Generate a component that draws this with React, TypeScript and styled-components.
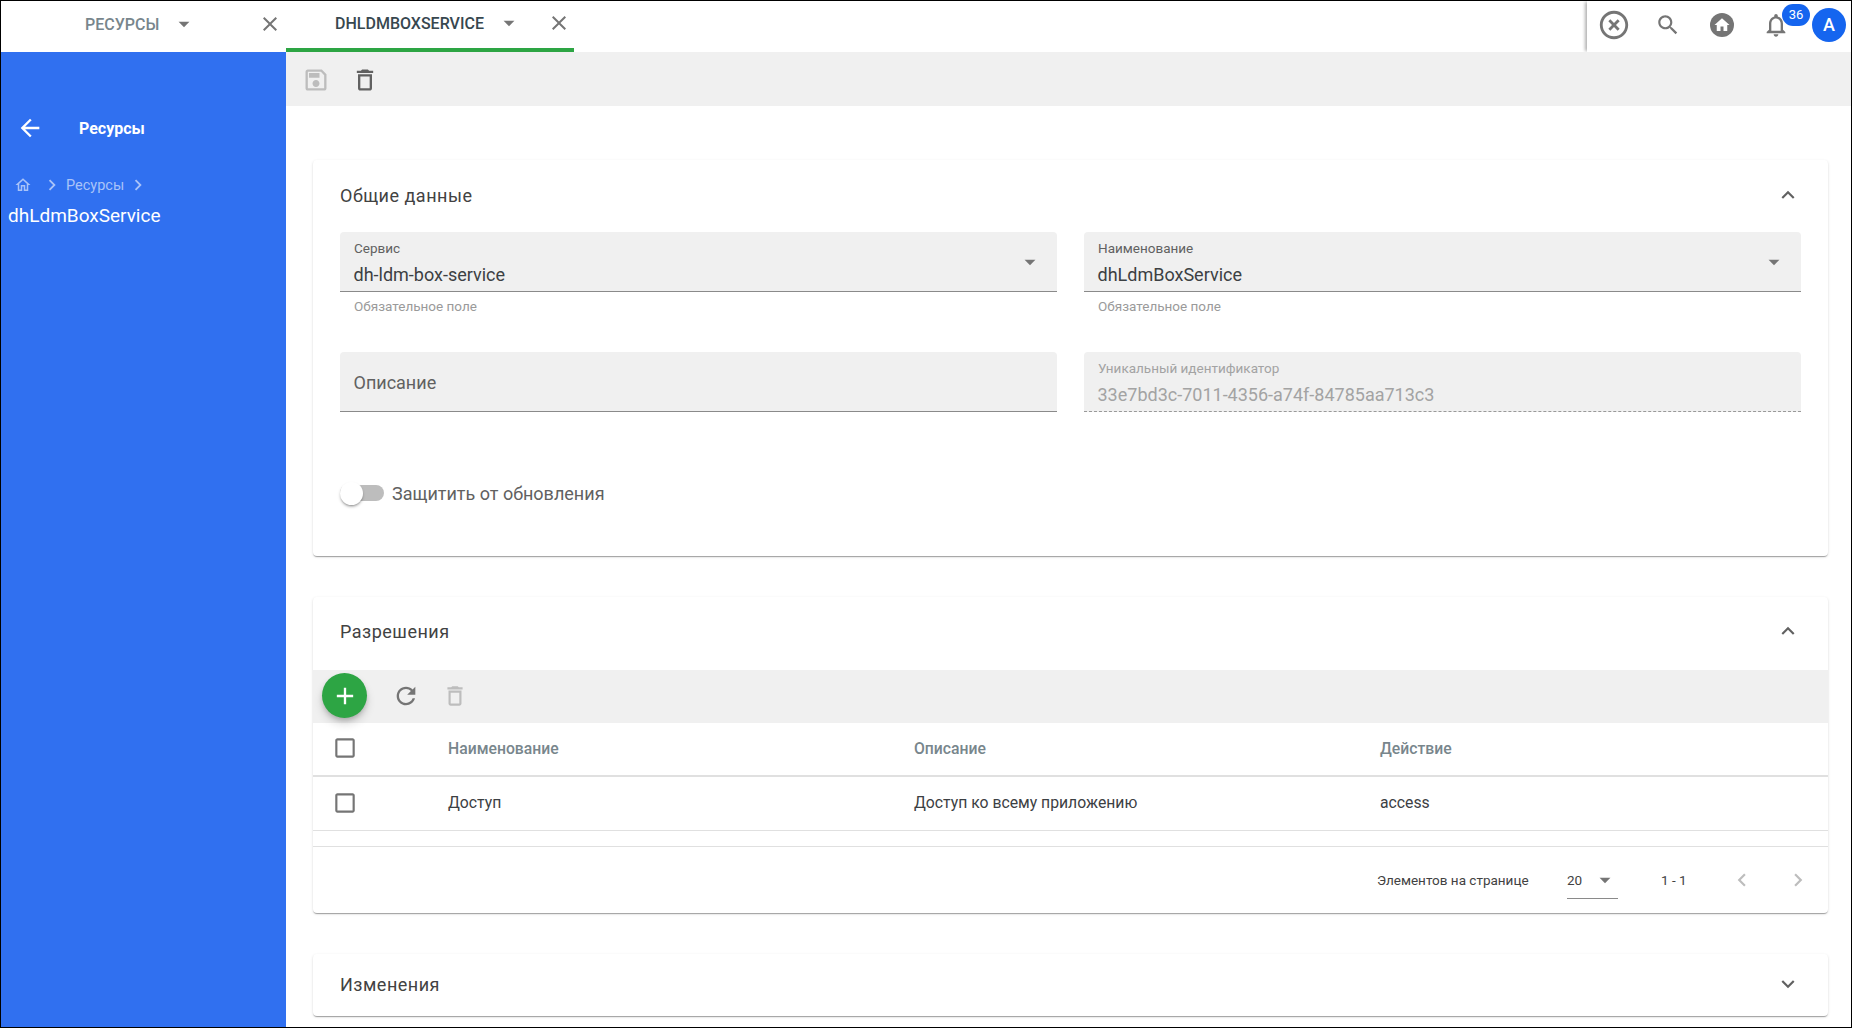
import React from "react";
import styled, { createGlobalStyle } from "styled-components";

const GlobalStyle = createGlobalStyle`
  html, body {
    margin: 0;
    padding: 0;
    background: #fff;
    font-family: Roboto, "Liberation Sans", sans-serif;
    color: #3c4043;
  }
`;

const ICONS = {
  close: "M19 6.41L17.59 5 12 10.59 6.41 5 5 6.41 10.59 12 5 17.59 6.41 19 12 13.41 17.59 19 19 17.59 13.41 12z",
  trash: "M6 19c0 1.1.9 2 2 2h8c1.1 0 2-.9 2-2V7H6v12zM8 9h8v10H8V9zm7.5-5l-1-1h-5l-1 1H5v2h14V4z",
  save: "M17 3H5c-1.11 0-2 .9-2 2v14c0 1.1.89 2 2 2h14c1.1 0 2-.9 2-2V7l-4-4zm2 16H5V5h11.17L19 7.83V19zm-7-7c-1.66 0-3 1.34-3 3s1.34 3 3 3 3-1.34 3-3-1.34-3-3-3zM6 6h9v4H6z",
  back: "M20 11H7.83l5.59-5.59L12 4l-8 8 8 8 1.41-1.41L7.83 13H20v-2z",
  homeOutline: "M12 5.69l5 4.5V18h-2v-6H9v6H7v-7.81l5-4.5M12 3L2 12h3v8h6v-6h2v6h6v-8h3L12 3z",
  home: "M10 20v-6h4v6h5v-8h3L12 3 2 12h3v8z",
  right: "M10 6L8.59 7.41 13.17 12l-4.58 4.59L10 18l6-6z",
  left: "M15.41 7.41L14 6l-6 6 6 6 1.41-1.41L10.83 12z",
  off: "M14.59 8L12 10.59 9.41 8 8 9.41 10.59 12 8 14.59 9.41 16 12 13.41 14.59 16 16 14.59 13.41 12 16 9.41 14.59 8zM12 2C6.47 2 2 6.47 2 12s4.47 10 10 10 10-4.47 10-10S17.53 2 12 2zm0 18c-4.41 0-8-3.59-8-8s3.59-8 8-8 8 3.59 8 8-3.59 8-8 8z",
  search: "M15.5 14h-.79l-.28-.27C15.41 12.59 16 11.11 16 9.5 16 5.91 13.09 3 9.5 3S3 5.91 3 9.5 5.91 16 9.5 16c1.61 0 3.09-.59 4.23-1.57l.27.28v.79l5 4.99L20.49 19l-4.99-5zm-6 0C7.01 14 5 11.99 5 9.5S7.01 5 9.5 5 14 7.01 14 9.5 11.99 14 9.5 14z",
  bell: "M12 22c1.1 0 2-.9 2-2h-4c0 1.1.9 2 2 2zm6-6v-5c0-3.07-1.63-5.64-4.5-6.32V4c0-.83-.67-1.5-1.5-1.5s-1.5.67-1.5 1.5v.68C7.64 5.36 6 7.92 6 11v5l-2 2v1h16v-1l-2-2zm-2 1H8v-6c0-2.48 1.51-4.5 4-4.5s4 2.02 4 4.5v6z",
  refresh: "M17.65 6.35C16.2 4.9 14.21 4 12 4c-4.42 0-7.99 3.58-7.99 8s3.57 8 7.99 8c3.73 0 6.84-2.55 7.73-6h-2.08c-.82 2.33-3.04 4-5.65 4-3.31 0-6-2.69-6-6s2.69-6 6-6c1.66 0 3.14.69 4.22 1.78L13 11h7V4l-2.35 2.35z",
  less: "M12 8l-6 6 1.41 1.41L12 10.83l4.59 4.58L18 14z",
  more: "M16.59 8.59L12 13.17 7.41 8.59 6 10l6 6 6-6z",
  add: "M19 13h-6v6h-2v-6H5v-2h6V5h2v6h6v2z",
  checkbox: "M19 5v14H5V5h14m0-2H5c-1.1 0-2 .9-2 2v14c0 1.1.9 2 2 2h14c1.1 0 2-.9 2-2V5c0-1.1-.9-2-2-2z",
  caret: "M7 10l5 5 5-5z",
};

const Svg = styled.svg<{ $size: number; $color: string }>`
  display: block;
  flex: none;
  width: ${(p) => p.$size}px;
  height: ${(p) => p.$size}px;
  fill: ${(p) => p.$color};
`;

type IconProps = { name: keyof typeof ICONS; size?: number; color?: string };

const Icon: React.FC<IconProps> = ({ name, size = 24, color = "#757575" }) => (
  <Svg viewBox="0 0 24 24" $size={size} $color={color}>
    <path d={ICONS[name]} />
  </Svg>
);

const Frame = styled.div`
  box-sizing: border-box;
  width: 1852px;
  height: 1028px;
  border: 1px solid #000;
  overflow: hidden;
  display: grid;
  grid-template-columns: 285px 1fr;
  grid-template-rows: 51px 1fr;
`;

const TopBar = styled.header`
  grid-column: 1 / 3;
  display: flex;
  background: #fff;
`;

const Tab = styled.div<{ $active?: boolean }>`
  box-sizing: border-box;
  width: ${(p) => (p.$active ? 288 : 285)}px;
  display: flex;
  align-items: center;
  padding: ${(p) => (p.$active ? "0 0 3px 49px" : "0 0 5px 84px")};
  font-size: 16px;
  font-weight: 500;
  text-transform: uppercase;
  color: ${(p) => (p.$active ? "#37474f" : "#78868c")};
  ${(p) => p.$active && "border-bottom: 4px solid #2da544;"}
`;

const TabLabel = styled.span<{ $active?: boolean }>`
  width: ${(p) => (p.$active ? 161 : 86)}px;
`;

const TabClose = styled.span<{ $active?: boolean }>`
  margin-left: ${(p) => (p.$active ? 25 : 61)}px;
`;

const TopActions = styled.div`
  margin-left: auto;
  width: 264px;
  height: 51px;
  box-sizing: border-box;
  padding: 0 0 4px 12px;
  display: flex;
  align-items: center;
  box-shadow: -3px 0 3px -1px rgba(0, 0, 0, 0.3);
  background: #fff;
`;

const ActionSlot = styled.div<{ $w: number }>`
  width: ${(p) => p.$w}px;
  flex: none;
  position: relative;
  display: flex;
  justify-content: center;
`;

const HomeCircle = styled.div`
  width: 24px;
  height: 24px;
  border-radius: 50%;
  background: #757575;
  display: flex;
  align-items: center;
  justify-content: center;
`;

const Badge = styled.div`
  position: absolute;
  top: -7px;
  left: 45px;
  width: 28px;
  height: 22px;
  border-radius: 11px;
  background: #1565ef;
  color: #fff;
  font-size: 13px;
  line-height: 21px;
  text-align: center;
`;

const Avatar = styled.div`
  width: 34px;
  height: 34px;
  border-radius: 50%;
  background: #1565ef;
  color: #fff;
  font-size: 18px;
  font-weight: 500;
  line-height: 34px;
  text-align: center;
  flex: none;
  margin-left: -3px;
  position: relative;
`;

const Sidebar = styled.aside`
  background: #3070f0;
  color: #fff;
  display: flex;
  flex-direction: column;
`;

const SideHead = styled.div`
  display: flex;
  align-items: center;
  margin-top: 62px;
  padding-left: 15px;
  font-size: 16px;
  font-weight: 700;
  gap: 35px;
`;

const Crumbs = styled.div`
  display: flex;
  align-items: center;
  gap: 3px;
  margin-top: 32px;
  padding-left: 13px;
  font-size: 14.5px;
  color: #a9c3f8;
`;

const CrumbHome = styled.span`
  margin-right: 6px;
`;

const SideTitle = styled.div`
  margin: 8px 0 0 7px;
  font-size: 19px;
  line-height: 24px;
`;

const Main = styled.main`
  min-width: 0;
  overflow: hidden;
`;

const Toolbar = styled.div`
  box-sizing: border-box;
  height: 54px;
  background: #f0f0f0;
  display: flex;
  align-items: center;
  padding: 2px 0 0 16px;
  gap: 21px;
`;

const Content = styled.div`
  padding: 54px 23px 0 27px;
  display: flex;
  flex-direction: column;
  gap: 41px;
`;

const Card = styled.section`
  background: #fff;
  border-radius: 4px;
  box-shadow: 0 2px 1px -1px rgba(0, 0, 0, 0.2), 0 1px 1px 0 rgba(0, 0, 0, 0.14),
    0 1px 3px 0 rgba(0, 0, 0, 0.12);
`;

const CardHead = styled.div<{ $h?: number; $lift?: number }>`
  box-sizing: border-box;
  height: ${(p) => p.$h ?? 70}px;
  padding: 0 27px ${(p) => p.$lift ?? 0}px 27px;
  display: flex;
  align-items: center;
  justify-content: space-between;
  font-size: 18px;
  color: #424242;
  letter-spacing: 0.5px;
`;

const CardBody = styled.div`
  padding: 2px 27px 0;
`;

const FieldGrid = styled.div`
  display: grid;
  grid-template-columns: 717px 717px;
  column-gap: 27px;
`;

const FieldWrap = styled.div`
  height: 120px;
`;

const FieldBox = styled.div<{ $disabled?: boolean }>`
  box-sizing: border-box;
  height: 60px;
  background: #f0f0f0;
  border-radius: 4px 4px 0 0;
  border-bottom: 1px ${(p) => (p.$disabled ? "dashed #999" : "solid #8a8a8a")};
  padding: 8px 13.5px 0;
  position: relative;
  display: flex;
  flex-direction: column;
`;

const FieldLabel = styled.div<{ $disabled?: boolean }>`
  font-size: 13.5px;
  line-height: 17px;
  margin-left: 0.5px;
  color: ${(p) => (p.$disabled ? "#a3a3a3" : "#616161")};
`;

const FieldValue = styled.div<{ $disabled?: boolean }>`
  font-size: 18px;
  line-height: 24px;
  margin-top: 6px;
  color: ${(p) => (p.$disabled ? "#a3a3a3" : "#3c4043")};
`;

const Placeholder = styled.div`
  font-size: 18px;
  line-height: 46px;
  color: #616161;
`;

const FieldCaret = styled.span`
  position: absolute;
  right: 14px;
  top: 17px;
`;

const Hint = styled.div`
  font-size: 13.5px;
  line-height: 16px;
  margin: 6px 0 0 14px;
  color: #9a9a9a;
`;

const ToggleRow = styled.div`
  display: flex;
  align-items: center;
  gap: 8px;
  margin-top: 9px;
  padding-bottom: 51px;
  font-size: 18px;
  color: #616161;
  height: 24px;
`;

const Toggle = styled.div`
  position: relative;
  width: 44px;
  height: 16px;
  border-radius: 8px;
  background: #bdbdbd;
`;

const Thumb = styled.div`
  position: absolute;
  left: 0;
  top: -3px;
  width: 23px;
  height: 23px;
  border-radius: 50%;
  background: #fff;
  box-shadow: 0 2px 2px -1px rgba(0, 0, 0, 0.3), 0 2px 3px 0 rgba(0, 0, 0, 0.2);
`;

const TableBar = styled.div`
  box-sizing: border-box;
  height: 53px;
  background: #f0f0f0;
  display: flex;
  align-items: center;
  padding: 0 0 2px 9px;
`;

const Fab = styled.div`
  width: 45px;
  height: 45px;
  border-radius: 50%;
  background: #2da544;
  display: flex;
  align-items: center;
  justify-content: center;
  box-shadow: 0 3px 5px -1px rgba(0, 0, 0, 0.2), 0 6px 10px 0 rgba(0, 0, 0, 0.14);
  margin-right: 25px;
`;

const TableRow = styled.div<{ $head?: boolean }>`
  display: grid;
  grid-template-columns: 135px 466px 466px 1fr;
  align-items: center;
  height: ${(p) => (p.$head ? 50 : 51)}px;
  padding-bottom: 2px;
  border-bottom: ${(p) => (p.$head ? "2px solid #e0e0e0" : "1px solid #e0e0e0")};
  font-size: 15.75px;
  font-weight: ${(p) => (p.$head ? 500 : 400)};
  color: ${(p) => (p.$head ? "#78868c" : "#3c4043")};
`;

const CheckCell = styled.div`
  padding-left: 19px;
`;

const Pager = styled.div`
  margin-top: 15px;
  border-top: 1px solid #e0e0e0;
  height: 66px;
  display: flex;
  align-items: center;
  font-size: 13.5px;
  color: #424242;
`;

const PagerLabel = styled.span`
  margin-left: 1064px;
  width: 190px;
`;

const PagerSelect = styled.div`
  box-sizing: border-box;
  width: 51px;
  height: 36px;
  margin-top: 2px;
  padding-bottom: 2px;
  border-bottom: 1px solid #8a8a8a;
  display: flex;
  align-items: center;
  justify-content: space-between;
`;

const PagerRange = styled.span`
  margin-left: 43px;
  width: 68px;
`;

const PagerArrows = styled.div`
  display: flex;
  gap: 30px;
`;

export default function App() {
  return (
    <Frame>
      <GlobalStyle />
      <TopBar>
        <Tab>
          <TabLabel>Ресурсы</TabLabel>
          <Icon name="caret" size={26} />
          <TabClose>
            <Icon name="close" />
          </TabClose>
        </Tab>
        <Tab $active>
          <TabLabel $active>dhLdmBoxService</TabLabel>
          <Icon name="caret" size={26} />
          <TabClose $active>
            <Icon name="close" />
          </TabClose>
        </Tab>
        <TopActions>
          <ActionSlot $w={30}>
            <Icon name="off" size={34} />
          </ActionSlot>
          <ActionSlot $w={78}>
            <Icon name="search" size={26} />
          </ActionSlot>
          <ActionSlot $w={30}>
            <HomeCircle>
              <Icon name="home" size={18} color="#fff" />
            </HomeCircle>
          </ActionSlot>
          <ActionSlot $w={78}>
            <Icon name="bell" size={28} />
            <Badge>36</Badge>
          </ActionSlot>
          <Avatar>A</Avatar>
        </TopActions>
      </TopBar>
      <Sidebar>
        <SideHead>
          <Icon name="back" color="#fff" size={28} />
          Ресурсы
        </SideHead>
        <Crumbs>
          <CrumbHome>
            <Icon name="homeOutline" size={18} color="#a9c3f8" />
          </CrumbHome>
          <Icon name="right" size={22} color="#a9c3f8" />
          Ресурсы
          <Icon name="right" size={22} color="#a9c3f8" />
        </Crumbs>
        <SideTitle>dhLdmBoxService</SideTitle>
      </Sidebar>
      <Main>
        <Toolbar>
          <Icon name="save" color="#bdbdbd" size={28} />
          <Icon name="trash" color="#616161" size={28} />
        </Toolbar>
        <Content>
          <Card>
            <CardHead>
              Общие данные
              <Icon name="less" color="#616161" size={26} />
            </CardHead>
            <CardBody>
              <FieldGrid>
                <FieldWrap>
                  <FieldBox>
                    <FieldLabel>Сервис</FieldLabel>
                    <FieldValue>dh-ldm-box-service</FieldValue>
                    <FieldCaret>
                      <Icon name="caret" size={26} />
                    </FieldCaret>
                  </FieldBox>
                  <Hint>Обязательное поле</Hint>
                </FieldWrap>
                <FieldWrap>
                  <FieldBox>
                    <FieldLabel>Наименование</FieldLabel>
                    <FieldValue>dhLdmBoxService</FieldValue>
                    <FieldCaret>
                      <Icon name="caret" size={26} />
                    </FieldCaret>
                  </FieldBox>
                  <Hint>Обязательное поле</Hint>
                </FieldWrap>
                <FieldWrap>
                  <FieldBox>
                    <Placeholder>Описание</Placeholder>
                  </FieldBox>
                </FieldWrap>
                <FieldWrap>
                  <FieldBox $disabled>
                    <FieldLabel $disabled>Уникальный идентификатор</FieldLabel>
                    <FieldValue $disabled>33e7bd3c-7011-4356-a74f-84785aa713c3</FieldValue>
                  </FieldBox>
                </FieldWrap>
              </FieldGrid>
              <ToggleRow>
                <Toggle>
                  <Thumb />
                </Toggle>
                Защитить от обновления
              </ToggleRow>
            </CardBody>
          </Card>
          <Card>
            <CardHead $h={73} $lift={5}>
              Разрешения
              <Icon name="less" color="#616161" size={26} />
            </CardHead>
            <TableBar>
              <Fab>
                <Icon name="add" color="#fff" size={28} />
              </Fab>
              <Icon name="refresh" size={28} />
              <ActionSlot $w={70}>
                <Icon name="trash" color="#bdbdbd" size={26} />
              </ActionSlot>
            </TableBar>
            <TableRow $head>
              <CheckCell>
                <Icon name="checkbox" size={26} />
              </CheckCell>
              <span>Наименование</span>
              <span>Описание</span>
              <span>Действие</span>
            </TableRow>
            <TableRow>
              <CheckCell>
                <Icon name="checkbox" size={26} />
              </CheckCell>
              <span>Доступ</span>
              <span>Доступ ко всему приложению</span>
              <span>access</span>
            </TableRow>
            <Pager>
              <PagerLabel>Элементов на странице</PagerLabel>
              <PagerSelect>
                20
                <Icon name="caret" size={26} />
              </PagerSelect>
              <PagerRange>1 - 1</PagerRange>
              <PagerArrows>
                <Icon name="left" color="#bdbdbd" size={26} />
                <Icon name="right" color="#bdbdbd" size={26} />
              </PagerArrows>
            </Pager>
          </Card>
          <Card>
            <CardHead $h={62} $lift={2}>
              Изменения
              <Icon name="more" color="#616161" size={26} />
            </CardHead>
          </Card>
        </Content>
      </Main>
    </Frame>
  );
}
